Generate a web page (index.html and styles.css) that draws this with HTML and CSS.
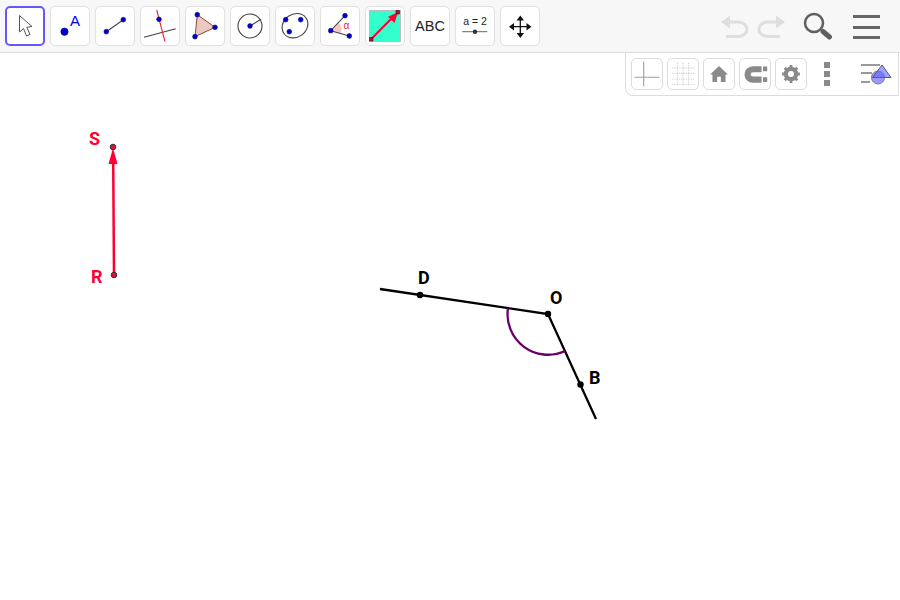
FILE: index.html
```html
<!DOCTYPE html>
<html lang="en">
<head>
<meta charset="utf-8">
<title>Geometry</title>
<link rel="stylesheet" href="styles.css">
</head>
<body>
<div class="app">
  <svg class="canvas" width="900" height="600" viewBox="0 0 900 600">
    <path class="ray" d="M380 289L548 314L596 419"/>
    <path class="arc" d="M508 308A40.5 40.5 0 0 0 565 351"/>
    <circle class="pt-black" cx="420" cy="295" r="3.2"/>
    <circle class="pt-black" cx="548" cy="314" r="3.2"/>
    <circle class="pt-black" cx="580.500" cy="384.500" r="3.2"/>
    <text class="lbl" x="418" y="284">D</text>
    <text class="lbl" x="550" y="304">O</text>
    <text class="lbl" x="589" y="384">B</text>
    <path class="vec" d="M114 275L113.200 160"/>
    <path class="vec-head" d="M113 148L117.500 164L108.500 164Z"/>
    <circle class="pt-red" cx="114" cy="275" r="2.800"/>
    <circle class="pt-red" cx="113" cy="147" r="2.800"/>
    <text class="lbl red" x="89" y="145">S</text>
    <text class="lbl red" x="91" y="283">R</text>
  </svg>

  <header class="toolbar">
    <div class="tools">
      <div class="tool active"><svg viewBox="0 0 40 40"><path class="cursor" d="M14.500 9.500L14.500 26L18.500 22.500L21.500 30L25 28.500L21.800 21.300L27 20.500Z"/></svg></div>
      <div class="tool"><svg viewBox="0 0 40 40"><circle class="bp" cx="14.500" cy="25.700" r="3.700"/><text class="blue-a" x="20" y="19.500">A</text></svg></div>
      <div class="tool"><svg viewBox="0 0 40 40"><path class="ln" d="M11.300 25.700L28.300 13.700"/><circle class="bp" cx="11.300" cy="25.700" r="2.400"/><circle class="bp" cx="28.300" cy="13.700" r="2.400"/></svg></div>
      <div class="tool"><svg viewBox="0 0 40 40"><path class="ln" d="M4 31.300L35.700 22.700"/><path class="ln-red" d="M16.700 4L25 35.700"/><circle class="bp" cx="19" cy="13.300" r="2.400"/></svg></div>
      <div class="tool"><svg viewBox="0 0 40 40"><path class="tri" d="M12.300 8.700L30 21.300L10 30.700Z"/><circle class="bp" cx="12.300" cy="8.700" r="2.400"/><circle class="bp" cx="30" cy="21.300" r="2.400"/><circle class="bp" cx="10" cy="30.700" r="2.400"/></svg></div>
      <div class="tool"><svg viewBox="0 0 40 40"><circle class="ln" cx="20" cy="20" r="12"/><path class="ln" d="M20 20L31 13.300"/><circle class="bp" cx="20" cy="20" r="2.400"/></svg></div>
      <div class="tool"><svg viewBox="0 0 40 40"><ellipse class="ln" cx="20" cy="19.700" rx="13.500" ry="11.500" transform="rotate(-35 20 19.700)"/><circle class="bp" cx="10.700" cy="13.700" r="2.400"/><circle class="bp" cx="25.700" cy="13.700" r="2.400"/><circle class="bp" cx="14.300" cy="25.700" r="2.400"/></svg></div>
      <div class="tool"><svg viewBox="0 0 40 40"><path class="sector" d="M10.700 24.700L18.500 16.500A11 11 0 0 1 21 27.500Z"/><path class="ln" d="M25 9.700L10.700 24.700L29.300 30"/><circle class="bp" cx="10.700" cy="24.700" r="2.400"/><circle class="bp" cx="25" cy="9.700" r="2.400"/><circle class="bp" cx="29.300" cy="30" r="2.400"/><text class="alpha" x="23.500" y="23">α</text></svg></div>
      <div class="tool"><svg viewBox="0 0 40 40"><rect class="teal" x="4.500" y="4.500" width="31" height="31"/><path class="vec-thin" d="M6 33.300L27 12"/><path class="vec-head" d="M33 6.300L29.500 17L23 10.800Z"/><rect class="corner" x="31" y="4.500" width="3.500" height="3.500"/><rect class="corner" x="4.500" y="31.500" width="3.500" height="3.500"/></svg></div>
      <div class="tool tool-text">ABC</div>
      <div class="tool"><svg viewBox="0 0 40 40"><text class="slider-t" x="20" y="19">a = 2</text><path class="slider-l" d="M7.300 25.700H32.300"/><circle class="slider-d" cx="20" cy="25.700" r="2.200"/></svg></div>
      <div class="tool"><svg viewBox="0 0 40 40"><path class="ln-b" d="M20.300 12V29.500M11.500 20.700H29"/><path class="head" d="M20.300 9.500L24 14.500H16.600ZM20.300 32L24 27H16.600ZM9 20.700L14 17V24.400ZM31.500 20.700L26.500 17V24.400Z"/></svg></div>
    </div>
    <div class="actions">
      <svg class="undo" width="30" height="26" viewBox="0 0 30 26"><path d="M4 8H18C30 8 30 22.500 18 22.500H6"/><path class="undo-h" d="M1 8L10 1.500V14.500Z"/></svg>
      <svg class="undo" width="30" height="26" viewBox="0 0 30 26"><path d="M26 8H12C0 8 0 22.500 12 22.500H24"/><path class="undo-h" d="M29 8L20 1.500V14.500Z"/></svg>
      <svg class="search" width="30" height="30" viewBox="0 0 30 30"><circle cx="11" cy="11" r="9"/><path class="s-h" d="M20 19.500L26.500 25"/></svg>
      <div class="burger"><span></span><span></span><span></span></div>
    </div>
  </header>

  <aside class="stylebar">
    <div class="sb-btn"><svg viewBox="0 0 32 32"><path class="axis" d="M2.500 19.500H29.500M12.500 3V29"/></svg></div>
    <div class="sb-btn"><svg viewBox="0 0 32 32"><path class="grid" d="M4 9.500H28M4 15.500H28M4 21.500H28M4 27H28M10 4V29M16 4V29M22 4V29"/></svg></div>
    <div class="sb-btn"><svg viewBox="0 0 32 32"><path class="fill" d="M16 7.500L25.500 16.500H23V24.500H18V19H14V24.500H9V16.500H6.500Z"/></svg></div>
    <div class="sb-btn"><svg viewBox="0 0 32 32"><path class="magnet" d="M23 11H14C6 11 6 22 14 22H23"/><path class="fill" d="M24.500 8H29V13H24.500ZM24.500 19.500H29V24.500H24.500Z"/></svg></div>
    <div class="sb-btn"><svg viewBox="0 0 32 32"><circle class="gear" cx="16" cy="16" r="5.500"/><path class="gear-t" d="M16 6.500V25.500M6.500 16H25.500M9.300 9.300L22.700 22.700M22.700 9.300L9.300 22.700"/></svg></div>
    <div class="dots"><span></span><span></span><span></span></div>
    <svg class="sb-menu" width="32" height="32" viewBox="0 0 32 32"><path class="sb-l" d="M1 7H20M1 15H12M1 24H10"/><circle class="sb-c" cx="18" cy="19.500" r="6.500"/><path class="sb-t" d="M22 7L31 19.500H12.500Z"/></svg>
  </aside>
</div>
</body>
</html>
```
FILE: styles.css
```css
* { box-sizing: border-box; }
html, body { margin: 0; padding: 0; background: #fff; }
.app {
  position: relative;
  width: 900px;
  height: 600px;
  overflow: hidden;
  background: #fff;
  font-family: "Liberation Sans", Arial, sans-serif;
}
.canvas { position: absolute; left: 0; top: 0; }
.toolbar {
  position: relative;
  height: 53px;
  display: flex;
  justify-content: space-between;
  padding: 6px 20px 0 5px;
  background: #f7f7f7;
  border-bottom: 1px solid #dcdcdc;
}
.tools { display: flex; gap: 5px; }
.tool {
  width: 40px;
  height: 40px;
  background: #fff;
  border: 1px solid #e0e0e0;
  border-radius: 5px;
  display: flex;
  align-items: center;
  justify-content: center;
}
.tool svg { width: 40px; height: 40px; flex: none; }
.tool.active { border: 2px solid #6557ff; }
.tool-text { font-size: 14.500px; color: #222; }
.actions { display: flex; align-items: flex-start; }
.undo { margin: 8px 6px 0 0; fill: none; }
.undo path { fill: none; stroke: #dedede; stroke-width: 3; }
.undo .undo-h { fill: #dedede; stroke: none; }
.search { margin: 6px 0 0 11px; }
.search circle { fill: none; stroke: #5f5f5f; stroke-width: 2.500; }
.s-h { stroke: #5f5f5f; stroke-width: 5; stroke-linecap: round; }
.burger { margin: 9px 0 0 20px; width: 27px; display: flex; flex-direction: column; gap: 7.500px; }
.burger span { display: block; height: 3px; background: #666; }

.bp { fill: #0000cc; stroke: #00006e; stroke-width: .5; }
.ln { fill: none; stroke: #444; stroke-width: 1.100; }
.ln-red { stroke: #e5243f; stroke-width: 1.100; }
.ln-b { stroke: #111; stroke-width: 1.300; }
.head { fill: #111; }
.tri { fill: #ebc8c0; stroke: #8a4a3c; stroke-width: 1; }
.sector { fill: #f3c9c4; }
.alpha { fill: #e5243f; font-size: 10px; font-family: "Liberation Sans", Arial, sans-serif; }
.blue-a { fill: #0000ff; font-size: 15px; font-family: "Liberation Sans", Arial, sans-serif; }
.cursor { fill: #fff; stroke: #444; stroke-width: .9; }
.teal { fill: #33ffcc; stroke: #bdbdbd; stroke-width: 1; }
.vec-thin { stroke: #ff0033; stroke-width: 2; }
.corner { fill: #cc0033; stroke: #222; stroke-width: .6; }
.slider-t { font-size: 10.500px; fill: #222; text-anchor: middle; font-family: "Liberation Sans", Arial, sans-serif; }
.slider-l { stroke: #666; stroke-width: 1; }
.slider-d { fill: #333; }

.stylebar {
  position: absolute;
  right: 1px;
  top: 53px;
  width: 274px;
  height: 43px;
  display: flex;
  align-items: flex-start;
  gap: 4px;
  padding: 5px 0 0 5px;
  background: #fff;
  border: 1px solid #dcdcdc;
  border-top: 0;
  border-bottom-left-radius: 8px;
}
.sb-btn { width: 32px; height: 32px; border: 1px solid #dcdcdc; border-radius: 5px; background: #fff; flex: none; }
.sb-btn svg { display: block; width: 30px; height: 30px; }
.axis { stroke: #a0a0a0; stroke-width: 1.200; fill: none; }
.grid { stroke: #cfcfcf; stroke-width: 1; stroke-dasharray: 1.500 1; fill: none; }
.fill { fill: #8a8a8a; }
.magnet { fill: none; stroke: #8a8a8a; stroke-width: 6.500; }
.gear { fill: none; stroke: #8a8a8a; stroke-width: 4.500; }
.gear-t { stroke: #8a8a8a; stroke-width: 3; stroke-dasharray: 3 13; fill: none; }
.dots { width: 6px; margin: 4px 0 0 13px; display: flex; flex-direction: column; gap: 3px; flex: none; }
.dots span { display: block; width: 6px; height: 6px; background: #8a8a8a; }
.sb-menu { margin: 0 0 0 26px; flex: none; }
.sb-l { stroke: #9a9a9a; stroke-width: 2; fill: none; }
.sb-c { fill: #9999ff; stroke: #7a7a9a; stroke-width: 1; }
.sb-t { fill: rgba(102, 102, 255, .6); stroke: #5a5a7a; stroke-width: 1; }

.ray { fill: none; stroke: #000; stroke-width: 2.300; stroke-linejoin: miter; }
.arc { fill: none; stroke: #660066; stroke-width: 2.300; }
.pt-black { fill: #000; }
.lbl { font-size: 18px; font-weight: 700; fill: #000; font-family: Roboto, "Liberation Sans", sans-serif; }
.lbl.red { fill: #ff0033; }
.vec { stroke: #ff0033; stroke-width: 2.500; fill: none; }
.vec-head { fill: #ff0033; }
.pt-red { fill: #e0103a; stroke: #333; stroke-width: 1; }
```
